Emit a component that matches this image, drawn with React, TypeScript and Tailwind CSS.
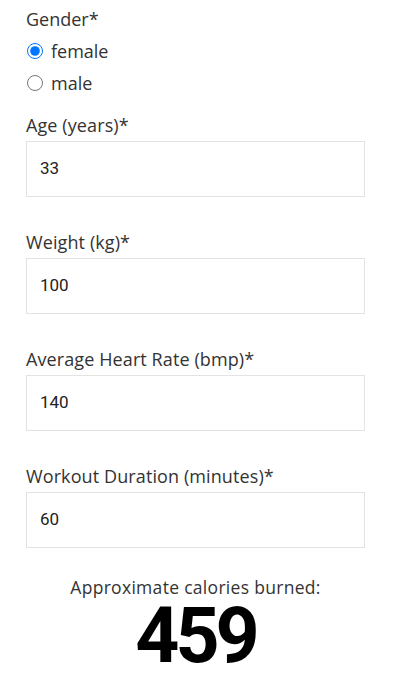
import React from "react";

function Field({ label, value }: { label: string; value: string }) {
  return (
    <div className="flex flex-col">
      <label className="text-[18px] leading-[24px] text-[#333333] font-medium tracking-[0.1px]">{label}</label>
      <div className="mt-[4px] h-[56px] w-[339px] border border-[#e3e3e3] bg-white flex items-center px-[13px]">
        <span className="text-[17px] text-[#222222] font-['Roboto',sans-serif]">{value}</span>
      </div>
    </div>
  );
}

export default function App() {
  return (
    <div className="min-h-[680px] w-[412px] bg-white font-['Open_Sans',sans-serif] overflow-hidden">
      <div className="pl-[26px] pt-[7px] flex flex-col">
        <div className="text-[18px] leading-[24px] text-[#333333] font-medium">Gender*</div>
        <label className="flex items-center h-[32px] mt-[4px] text-[18px] text-[#333333] font-medium">
          <input type="radio" name="g" defaultChecked className="w-[16px] h-[16px] m-0 ml-[1px] accent-[#0075ff]" />
          <span className="ml-[8px]">female</span>
        </label>
        <label className="flex items-center h-[32px] text-[18px] text-[#333333] font-medium">
          <input type="radio" name="g" className="w-[16px] h-[16px] m-0 ml-[1px]" />
          <span className="ml-[8px]">male</span>
        </label>
        <div className="mt-[14px] flex flex-col gap-[33px]">
          <Field label="Age (years)*" value="33" />
          <Field label="Weight (kg)*" value="100" />
          <Field label="Average Heart Rate (bmp)*" value="140" />
          <Field label="Workout Duration (minutes)*" value="60" />
        </div>
        <div className="w-[339px] flex flex-col items-center mt-[29px]">
          <div className="text-[17.5px] leading-[20px] text-[#333333] font-medium tracking-[0.3px]">Approximate calories burned:</div>
          <div className="text-[77px] leading-[60px] font-bold text-black tracking-[-4px] font-['Roboto',sans-serif] mt-[9px]">459</div>
        </div>
      </div>
    </div>
  );
}
